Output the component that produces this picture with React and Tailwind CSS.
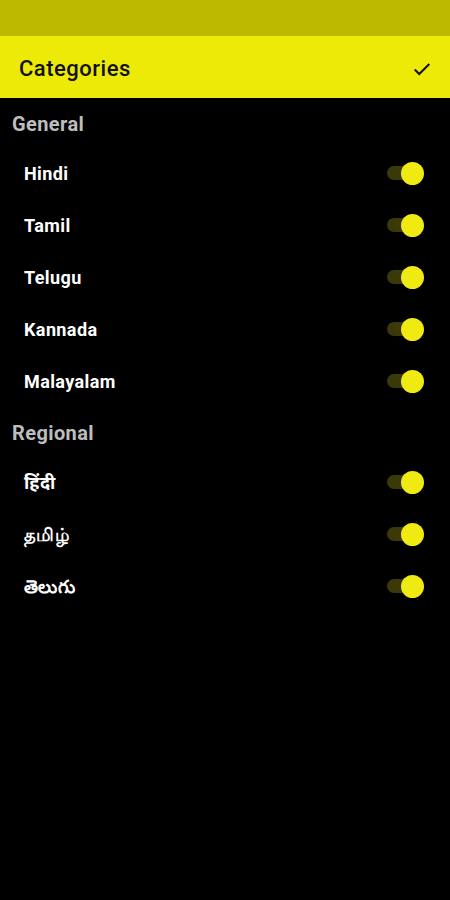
import { useState } from "react";

const sections = [
  { title: "General", items: ["Hindi", "Tamil", "Telugu", "Kannada", "Malayalam"] },
  { title: "Regional", items: ["हिंदी", "தமிழ்", "తెలుగు"] },
];

function Toggle({ on, onClick }) {
  return (
    <button onClick={onClick} className="relative w-[40px] h-[24px] flex items-center">
      <span className={`absolute left-[3px] w-[34px] h-[14px] rounded-full ${on ? "bg-[#3b390a]" : "bg-[#444]"}`} />
      <span
        className={`absolute top-[1px] w-[23px] h-[23px] rounded-full ${
          on ? "left-[17px] bg-[#efea12]" : "left-0 bg-[#bbb]"
        }`}
      />
    </button>
  );
}

export default function App() {
  const [state, setState] = useState({});

  return (
    <div className="w-[450px] h-[900px] bg-black font-['Roboto','Noto_Sans',sans-serif]">
      {/* Status bar */}
      <div className="h-[36px] bg-[#bdb800]" />

      {/* Toolbar */}
      <div className="h-[62px] bg-[#eeea08] flex items-center justify-between pl-[19px] pr-[17px] pt-[3px]">
        <h1 className="text-[22px] font-medium tracking-[0.5px] text-[#111]">Categories</h1>
        <svg width="22" height="22" viewBox="0 0 24 24" fill="none" stroke="#111" strokeWidth="2.2">
          <path d="M4 12.5l5 5L20 6.5" />
        </svg>
      </div>

      {/* List */}
      {sections.map((s) => (
        <div key={s.title}>
          <div className="h-[49px] flex items-center pl-[12px] pt-[3px] text-[20px] font-bold tracking-[0.4px] text-[#bdbdbd]">
            {s.title}
          </div>
          {s.items.map((it) => {
            const on = state[it] !== false;
            return (
              <div key={it} className="h-[52px] flex items-center justify-between pl-[24px] pr-[26px]">
                <span className="text-[18px] font-bold tracking-[0.4px] text-white">{it}</span>
                <Toggle on={on} onClick={() => setState({ ...state, [it]: !on })} />
              </div>
            );
          })}
        </div>
      ))}
    </div>
  );
}
